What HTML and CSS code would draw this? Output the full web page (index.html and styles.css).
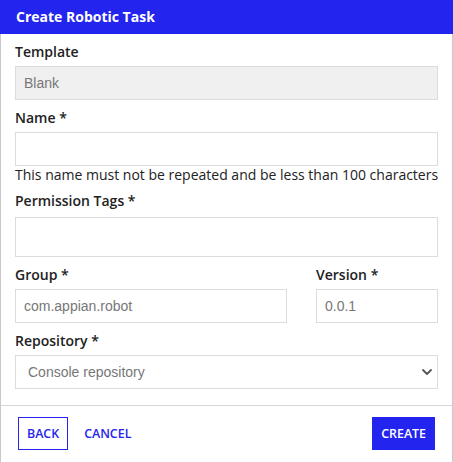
FILE: index.html
```html
<!DOCTYPE html>
<html lang="en">
<head>
<meta charset="utf-8">
<title>Create Robotic Task</title>
<link rel="stylesheet" href="styles.css">
</head>
<body>
<div class="dialog">
  <div class="dialog-header">Create Robotic Task</div>
  <div class="dialog-body">
    <div class="field">
      <div class="label">Template</div>
      <div class="input disabled">Blank</div>
    </div>
    <div class="field">
      <div class="label">Name *</div>
      <div class="input"></div>
      <div class="help">This name must not be repeated and be less than 100 characters</div>
    </div>
    <div class="field">
      <div class="label">Permission Tags *</div>
      <div class="input tags"></div>
    </div>
    <div class="row">
      <div class="field">
        <div class="label">Group *</div>
        <div class="input">com.appian.robot</div>
      </div>
      <div class="field">
        <div class="label">Version *</div>
        <div class="input">0.0.1</div>
      </div>
    </div>
    <div class="field">
      <div class="label">Repository *</div>
      <div class="input select">
        <span>Console repository</span>
        <svg class="chev" width="10" height="6" viewBox="0 0 10 6"><path d="M1 1 L5 5 L9 1" fill="none" stroke="#555" stroke-width="1.8" stroke-linecap="round" stroke-linejoin="round"/></svg>
      </div>
    </div>
  </div>
  <div class="dialog-footer">
    <div class="left">
      <button class="btn outline">BACK</button>
      <button class="btn text">CANCEL</button>
    </div>
    <button class="btn primary">CREATE</button>
  </div>
</div>
</body>
</html>
```

FILE: styles.css
```css
* { box-sizing: border-box; }
html, body { margin: 0; padding: 0; background: #fff; }
body { font-family: "Open Sans", "Liberation Sans", sans-serif; color: #222; }

.dialog {
  width: 453px;
  border: 1px solid #c9c9c9;
  border-top: none;
  display: flex;
  flex-direction: column;
}
.dialog-header {
  background: #2424ef;
  color: #fff;
  font-weight: 700;
  font-size: 14px;
  height: 34px;
  line-height: 34px;
  padding-left: 16px;
  margin: 0 -1px;
}
.dialog-body {
  padding: 8px 14px 16px;
  display: flex;
  flex-direction: column;
  gap: 8px;
}
.field { display: flex; flex-direction: column; }
.label {
  font-size: 14px;
  font-weight: 600;
  line-height: 20px;
  margin-bottom: 4px;
  color: #222;
}
.input {
  height: 34px;
  border: 1px solid #dcdcdc;
  background: #fff;
  font-family: "Liberation Sans", Arial, sans-serif;
  font-size: 14px;
  color: #777;
  padding: 0 8px;
  display: flex;
  align-items: center;
}
.input.disabled { background: #f0f0f0; }
.input.tags { height: 40px; margin-top: 2px; }
.help {
  font-size: 14px;
  line-height: 18px;
  margin-bottom: -1px;
  color: #222;
  white-space: nowrap;
}
.row {
  display: grid;
  grid-template-columns: 1fr 122px;
  column-gap: 29px;
}
.select { justify-content: space-between; padding: 0 5px 0 12px; }
.chev { display: block; }

.dialog-footer {
  border-top: 1px solid #d6d6d6;
  padding: 11px 17px 12px 17px;
  display: flex;
  justify-content: space-between;
  align-items: center;
}
.left { display: flex; gap: 7px; }
.btn {
  font-family: "Open Sans", "Liberation Sans", sans-serif;
  font-weight: 600;
  font-size: 12.4px;
  height: 33px;
  padding: 0 8px;
  border: 1px solid transparent;
  background: transparent;
  color: #2424ef;
  cursor: pointer;
}
.btn.outline { border-color: #2424ef; }
.btn.primary { background: #2424ef; color: #fff; }
```
